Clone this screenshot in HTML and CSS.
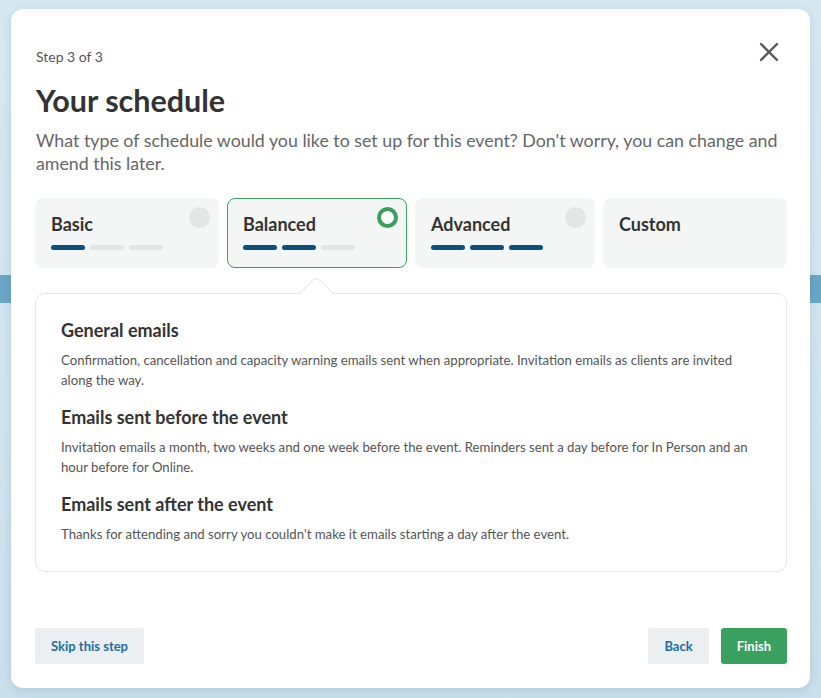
FILE: index.html
```html
<!DOCTYPE html>
<html lang="en">
<head>
<meta charset="utf-8">
<title>Your schedule</title>
<link rel="stylesheet" href="styles.css">
</head>
<body>
<div class="modal">
  <div class="modal-head">
    <div class="step">Step 3 of 3</div>
    <button class="close" aria-label="Close">
      <svg width="22" height="22" viewBox="0 0 22 22"><path d="M3 3 L19 19 M19 3 L3 19" stroke="#5a5a5a" stroke-width="2.4" stroke-linecap="round"/></svg>
    </button>
  </div>
  <h1 class="title">Your schedule</h1>
  <p class="lead">What type of schedule would you like to set up for this event? Don't worry, you can change and amend this later.</p>

  <div class="options">
    <div class="option">
      <div class="opt-name">Basic</div>
      <div class="bars"><span class="bar on"></span><span class="bar"></span><span class="bar"></span></div>
      <span class="radio"></span>
    </div>
    <div class="option selected">
      <div class="opt-name">Balanced</div>
      <div class="bars"><span class="bar on"></span><span class="bar on"></span><span class="bar"></span></div>
      <span class="radio checked"></span>
    </div>
    <div class="option">
      <div class="opt-name">Advanced</div>
      <div class="bars"><span class="bar on"></span><span class="bar on"></span><span class="bar on"></span></div>
      <span class="radio"></span>
    </div>
    <div class="option">
      <div class="opt-name">Custom</div>
    </div>
  </div>

  <div class="panel">
    <span class="notch"></span>
    <h2>General emails</h2>
    <p>Confirmation, cancellation and capacity warning emails sent when appropriate. Invitation emails as clients are invited along the way.</p>
    <h2>Emails sent before the event</h2>
    <p>Invitation emails a month, two weeks and one week before the event. Reminders sent a day before for In Person and an hour before for Online.</p>
    <h2>Emails sent after the event</h2>
    <p>Thanks for attending and sorry you couldn't make it emails starting a day after the event.</p>
  </div>

  <div class="footer">
    <button class="btn btn-light">Skip this step</button>
    <div class="footer-right">
      <button class="btn btn-light">Back</button>
      <button class="btn btn-green">Finish</button>
    </div>
  </div>
</div>
</body>
</html>
```

FILE: styles.css
```css
* { box-sizing: border-box; }
html, body { margin: 0; padding: 0; }
body {
  width: 821px;
  height: 698px;
  overflow: hidden;
  font-family: Lato, "Open Sans", Arial, sans-serif;
  background:
    linear-gradient(to bottom, transparent 0, transparent 275px, #6aa6c6 275px, #6aa6c6 303px, transparent 303px),
    linear-gradient(to bottom, #d6e8f2 0%, #d0e4ef 60%, #c9dfec 100%);
  padding: 9px 11px 10px 11px;
}
.modal {
  width: 799px;
  height: 679px;
  background: #fff;
  border-radius: 12px;
  padding: 38px 23px 24px 24px;
  display: flex;
  flex-direction: column;
  box-shadow: 0 2px 10px rgba(40, 80, 110, 0.15);
}
.modal-head {
  display: flex;
  justify-content: space-between;
  align-items: center;
  height: 20px;
}
.step {
  font-size: 14px;
  line-height: 20px;
  color: #555;
  padding-left: 1px;
}
.close {
  border: 0;
  background: none;
  padding: 0;
  width: 22px;
  height: 22px;
  margin-right: 7px;
  margin-top: -10px;
  cursor: pointer;
}
.close svg { display: block; }
.title {
  margin: 15px 0 0;
  padding-left: 1px;
  font-size: 30.5px;
  line-height: 36px;
  font-weight: 700;
  color: #333;
}
.lead {
  margin: 11px 0 0;
  padding-left: 1px;
  font-size: 17.8px;
  line-height: 23px;
  color: #666;
}
.options {
  margin-top: 23px;
  display: grid;
  grid-template-columns: 184px 180px 180px 184px;
  gap: 8px;
}
.option {
  position: relative;
  height: 70px;
  background: #f4f6f6;
  border: 1px solid transparent;
  border-radius: 8px;
  padding: 13px 15px 0;
}
.option.selected { border-color: #3f9e60; }
.opt-name {
  font-size: 18px;
  line-height: 24px;
  font-weight: 700;
  color: #333;
}
.bars {
  display: flex;
  gap: 5px;
  margin-top: 9px;
}
.bar {
  width: 34px;
  height: 5px;
  border-radius: 3px;
  background: #e4e6e6;
}
.bar.on { background: #0d4f80; }
.radio {
  position: absolute;
  top: 8px;
  right: 8px;
  width: 21px;
  height: 21px;
  border-radius: 50%;
  background: #e4e6e6;
}
.radio.checked {
  background: #fff;
  border: 4px solid #3a9e5f;
}
.panel {
  position: relative;
  margin-top: 25px;
  border: 1px solid #e6e8e8;
  border-radius: 10px;
  background: #fff;
  padding: 24px 25px 27px;
}
.notch {
  position: absolute;
  left: 268px;
  top: -13px;
  width: 25px;
  height: 25px;
  background: #fff;
  border-left: 1px solid #e3e5e5;
  border-top: 1px solid #e3e5e5;
  border-top-left-radius: 6px;
  transform: rotate(45deg);
}
.panel h2 {
  position: relative;
  margin: 15px 0 0;
  font-size: 18px;
  line-height: 24px;
  font-weight: 700;
  color: #333;
}
.panel h2:first-of-type { margin-top: 0; }
.panel p {
  margin: 8px 0 0;
  font-size: 13.2px;
  line-height: 20px;
  color: #555;
}
.footer {
  margin-top: auto;
  display: flex;
  justify-content: space-between;
  align-items: center;
}
.footer-right {
  display: flex;
  gap: 12px;
}
.btn {
  height: 36px;
  border: 0;
  border-radius: 3px;
  padding: 0 16px;
  font-family: Lato, "Open Sans", Arial, sans-serif;
  font-size: 13px;
  font-weight: 700;
  cursor: pointer;
}
.btn-light {
  background: #ebeff2;
  color: #236e9e;
}
.btn-green {
  background: #3aa05f;
  color: #fff;
  padding: 0 16px;
}
```
